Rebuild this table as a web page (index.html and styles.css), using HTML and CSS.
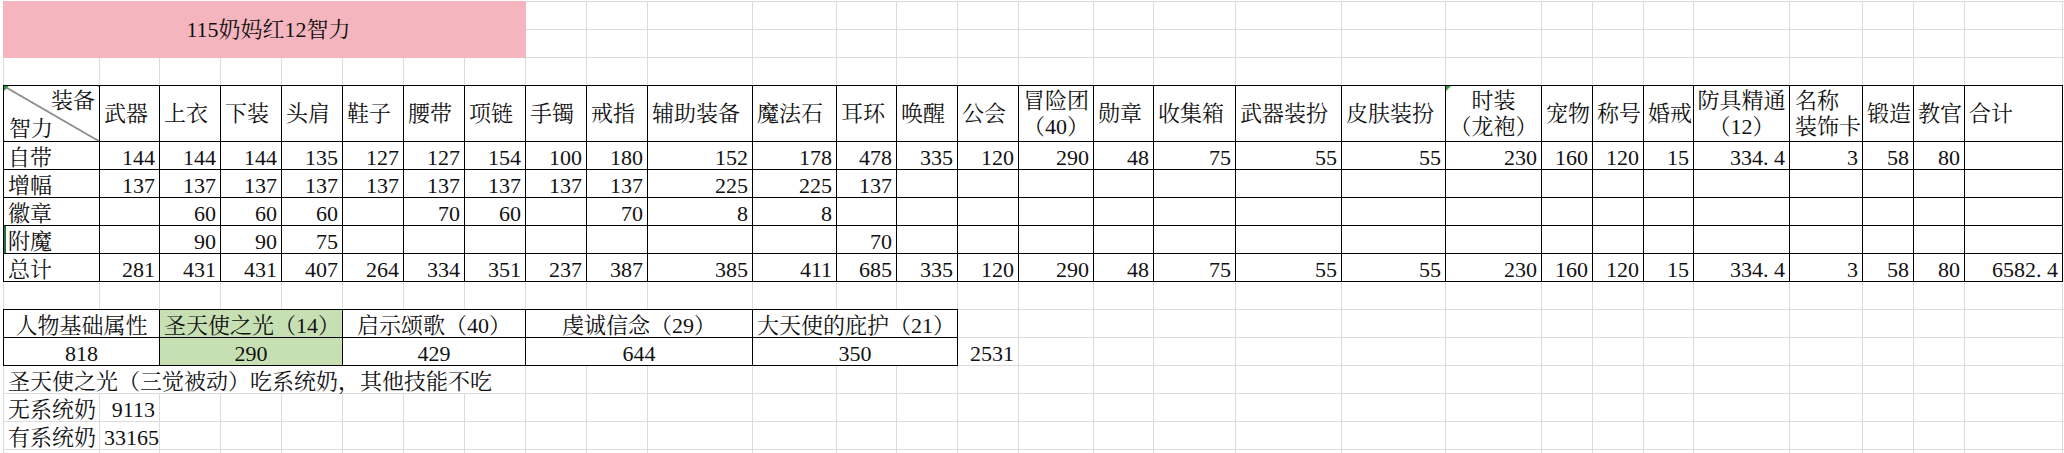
FILE: index.html
```html
<!DOCTYPE html>
<html lang="zh-CN">
<head>
<meta charset="utf-8">
<title>115奶妈红12智力</title>
<link rel="stylesheet" href="styles.css">
</head>
<body>
<div class="sheet">
<table class="grid">
<colgroup>
<col style="width:96px"><col style="width:60px"><col style="width:61px"><col style="width:61px"><col style="width:61px"><col style="width:61px"><col style="width:61px"><col style="width:61px"><col style="width:61px"><col style="width:61px"><col style="width:105px"><col style="width:84px"><col style="width:60px"><col style="width:61px"><col style="width:61px"><col style="width:75px"><col style="width:60px"><col style="width:82px"><col style="width:106px"><col style="width:104px"><col style="width:96px"><col style="width:51px"><col style="width:51px"><col style="width:50px"><col style="width:96px"><col style="width:73px"><col style="width:51px"><col style="width:51px"><col style="width:98px"><col style="width:60px">
</colgroup>
<tbody>
<tr class="r">
<td class="banner" colspan="8" rowspan="2">115奶妈红12智力</td>
<td></td><td></td><td></td><td></td><td></td><td></td><td></td><td></td><td></td><td></td><td></td><td></td><td></td><td></td><td></td><td></td><td></td><td></td><td></td><td></td><td></td><td></td>
</tr>
<tr class="r">
<td></td><td></td><td></td><td></td><td></td><td></td><td></td><td></td><td></td><td></td><td></td><td></td><td></td><td></td><td></td><td></td><td></td><td></td><td></td><td></td><td></td><td></td>
</tr>
<tr class="r">
<td></td><td></td><td></td><td></td><td></td><td></td><td></td><td></td><td></td><td></td><td></td><td></td><td></td><td></td><td></td><td></td><td></td><td></td><td></td><td></td><td></td><td></td><td></td><td></td><td></td><td></td><td></td><td></td><td></td><td></td>
</tr>
<tr class="t hr">
<td class="diag mark"><div class="diagbox"><span class="dt">装备</span><span class="db">智力</span></div></td>
<td>武器</td><td>上衣</td><td>下装</td><td>头肩</td><td>鞋子</td><td>腰带</td><td>项链</td><td>手镯</td><td>戒指</td><td>辅助装备</td><td>魔法石</td><td>耳环</td><td>唤醒</td><td>公会</td>
<td class="hc">冒险团<br>（40）</td>
<td>勋章</td><td>收集箱</td><td>武器装扮</td><td>皮肤装扮</td>
<td class="hc mark">时装<br>（龙袍）</td>
<td>宠物</td><td>称号</td><td>婚戒</td>
<td class="hc">防具精通<br>（12）</td>
<td class="h2">名称<br>装饰卡</td>
<td>锻造</td><td>教官</td><td>合计</td>
<td class="g"></td>
</tr>
<tr class="t">
<td class="l">自带</td>
<td>144</td><td>144</td><td>144</td><td>135</td><td>127</td><td>127</td><td>154</td><td>100</td><td>180</td><td>152</td><td>178</td><td>478</td><td>335</td><td>120</td><td>290</td><td>48</td><td>75</td><td>55</td><td>55</td><td>230</td><td>160</td><td>120</td><td>15</td><td>334<span class="dp">.</span>4</td><td>3</td><td>58</td><td>80</td><td></td>
<td class="g"></td>
</tr>
<tr class="t">
<td class="l">增幅</td>
<td>137</td><td>137</td><td>137</td><td>137</td><td>137</td><td>137</td><td>137</td><td>137</td><td>137</td><td>225</td><td>225</td><td>137</td><td></td><td></td><td></td><td></td><td></td><td></td><td></td><td></td><td></td><td></td><td></td><td></td><td></td><td></td><td></td><td></td>
<td class="g"></td>
</tr>
<tr class="t">
<td class="l">徽章</td>
<td></td><td>60</td><td>60</td><td>60</td><td></td><td>70</td><td>60</td><td></td><td>70</td><td>8</td><td>8</td><td></td><td></td><td></td><td></td><td></td><td></td><td></td><td></td><td></td><td></td><td></td><td></td><td></td><td></td><td></td><td></td><td></td>
<td class="g"></td>
</tr>
<tr class="t">
<td class="l sel">附魔</td>
<td></td><td>90</td><td>90</td><td>75</td><td></td><td></td><td></td><td></td><td></td><td></td><td></td><td>70</td><td></td><td></td><td></td><td></td><td></td><td></td><td></td><td></td><td></td><td></td><td></td><td></td><td></td><td></td><td></td><td></td>
<td class="g"></td>
</tr>
<tr class="t">
<td class="l">总计</td>
<td>281</td><td>431</td><td>431</td><td>407</td><td>264</td><td>334</td><td>351</td><td>237</td><td>387</td><td>385</td><td>411</td><td>685</td><td>335</td><td>120</td><td>290</td><td>48</td><td>75</td><td>55</td><td>55</td><td>230</td><td>160</td><td>120</td><td>15</td><td>334<span class="dp">.</span>4</td><td>3</td><td>58</td><td>80</td><td>6582<span class="dp">.</span>4</td>
<td class="g"></td>
</tr>
<tr class="r">
<td></td><td></td><td></td><td></td><td></td><td></td><td></td><td></td><td></td><td></td><td></td><td></td><td></td><td></td><td></td><td></td><td></td><td></td><td></td><td></td><td></td><td></td><td></td><td></td><td></td><td></td><td></td><td></td><td></td><td></td>
</tr>
<tr class="r">
<td class="k" colspan="2">人物基础属性</td>
<td class="k green" colspan="3">圣天使之光（14）</td>
<td class="k" colspan="3">启示颂歌（40）</td>
<td class="k" colspan="3">虔诚信念（29）</td>
<td class="k" colspan="3">大天使的庇护（21）</td>
<td></td><td></td><td></td><td></td><td></td><td></td><td></td><td></td><td></td><td></td><td></td><td></td><td></td><td></td><td></td><td></td>
</tr>
<tr class="r">
<td class="k" colspan="2">818</td>
<td class="k green" colspan="3">290</td>
<td class="k" colspan="3">429</td>
<td class="k" colspan="3">644</td>
<td class="k" colspan="3">350</td>
<td class="n">2531</td>
<td></td><td></td><td></td><td></td><td></td><td></td><td></td><td></td><td></td><td></td><td></td><td></td><td></td><td></td><td></td>
</tr>
<tr class="r">
<td class="note" colspan="8">圣天使之光（三觉被动）吃系统奶，其他技能不吃</td>
<td></td><td></td><td></td><td></td><td></td><td></td><td></td><td></td><td></td><td></td><td></td><td></td><td></td><td></td><td></td><td></td><td></td><td></td><td></td><td></td><td></td><td></td>
</tr>
<tr class="r">
<td>无系统奶</td><td class="n">9113</td>
<td></td><td></td><td></td><td></td><td></td><td></td><td></td><td></td><td></td><td></td><td></td><td></td><td></td><td></td><td></td><td></td><td></td><td></td><td></td><td></td><td></td><td></td><td></td><td></td><td></td><td></td><td></td><td></td>
</tr>
<tr class="r">
<td>有系统奶</td><td class="n">33165</td>
<td></td><td></td><td></td><td></td><td></td><td></td><td></td><td></td><td></td><td></td><td></td><td></td><td></td><td></td><td></td><td></td><td></td><td></td><td></td><td></td><td></td><td></td><td></td><td></td><td></td><td></td><td></td><td></td>
</tr>
<tr class="r">
<td></td><td></td><td></td><td></td><td></td><td></td><td></td><td></td><td></td><td></td><td></td><td></td><td></td><td></td><td></td><td></td><td></td><td></td><td></td><td></td><td></td><td></td><td></td><td></td><td></td><td></td><td></td><td></td><td></td><td></td>
</tr>
</tbody>
</table>
</div>
</body>
</html>
```
FILE: styles.css
```css
html, body {
  margin: 0;
  padding: 0;
  background: #ffffff;
  overflow: hidden;
}

.sheet {
  width: 2064px;
  height: 453px;
  overflow: hidden;
  padding: 1px 0 0 3px;
  box-sizing: border-box;
}

.grid {
  border-collapse: collapse;
  table-layout: fixed;
  width: 2119px;
  font-family: "Liberation Serif", "Noto Serif CJK SC", "Noto Sans CJK SC", serif;
  font-size: 22px;
  color: #111111;
}

.grid td {
  border: 1px solid #dcdcdc;
  padding: 0 4px;
  line-height: 22px;
  vertical-align: bottom;
  white-space: nowrap;
  overflow: hidden;
}

.grid tr.r,
.grid tr.t {
  height: 28px;
}

.grid tr.hr {
  height: 56px;
}

/* main table block */
.grid tr.t td {
  border: 1px double #000000;
  text-align: right;
}

.grid tr.t td.g {
  border: 1px solid #dcdcdc;
}

.grid tr.t td.l {
  text-align: left;
}

.grid tr.hr td {
  text-align: left;
  vertical-align: middle;
  line-height: 26px;
}

.grid tr.hr td.hc {
  text-align: center;
  padding: 0 2px;
}

.grid tr.hr td.h2 {
  text-align: left;
  padding-left: 5px;
}

/* diagonal header cell */
.grid tr.hr td.diag {
  padding: 0;
  background: linear-gradient(to top right, transparent calc(50% - 0.8px), #000000 50%, transparent calc(50% + 0.8px));
}

.diagbox {
  display: flex;
  flex-direction: column;
  justify-content: space-between;
  height: 54px;
  padding: 2px 4px 0 5px;
  box-sizing: border-box;
  line-height: 24px;
}

.dt {
  align-self: flex-end;
}

.db {
  align-self: flex-start;
}

/* green error-indicator triangles */
.grid td.mark {
  position: relative;
}

.grid td.mark::before {
  content: "";
  position: absolute;
  left: 0;
  top: 0;
  width: 0;
  height: 0;
  border-top: 5px solid #2f9b3c;
  border-right: 5px solid transparent;
}

.grid td.sel {
  box-shadow: inset 2px 0 0 #217346;
}

.dp {
  margin-right: 0.25em;
}

/* banner */
.grid td.banner {
  background: #f4b5be;
  border: 1px solid #f4b5be;
  text-align: center;
  vertical-align: middle;
  padding-left: 12px;
}

/* skill box */
.grid td.k {
  border: 1px double #000000;
  text-align: center;
}

.grid td.green {
  background: #c6e0b4;
}

.grid td.n {
  text-align: right;
}

.grid td.note {
  text-align: left;
  overflow: visible;
}
```
